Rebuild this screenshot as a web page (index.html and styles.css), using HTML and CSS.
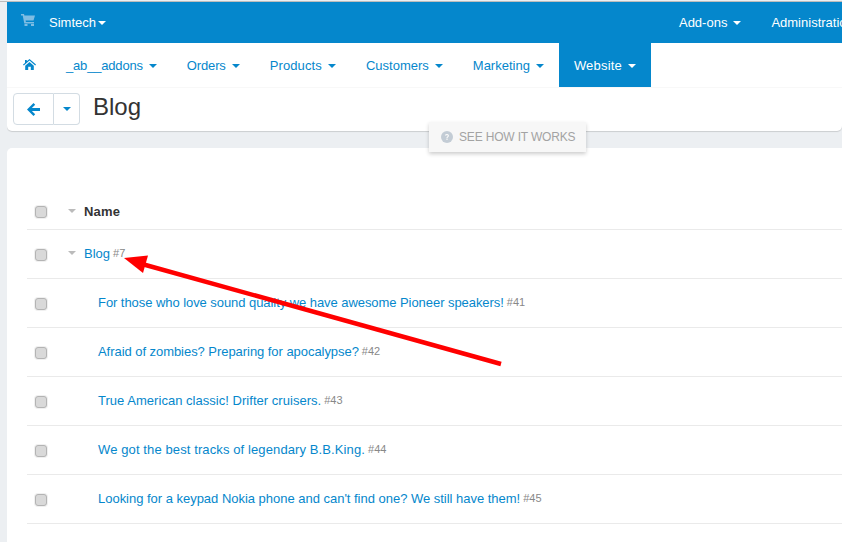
FILE: index.html
```html
<!DOCTYPE html>
<html lang="en">
<head>
<meta charset="utf-8">
<title>Blog</title>
<link rel="stylesheet" href="styles.css">
</head>
<body>
<div class="rule"></div>
<div class="page">
  <header class="topbar">
    <svg class="cart" viewBox="0 0 14 12" width="14" height="12"><path d="M0 0h3l.4 1.500H14l-1.500 5H4.600l.3 1.500H13v1.500H3.300L1.700 1.500H0z"/><rect x="3.500" y="10" width="3" height="2"/><rect x="10" y="10" width="3" height="2"/></svg>
    <a class="brand">Simtech<span class="caret"></span></a>
    <nav class="topright">
      <a class="addons">Add-ons<span class="caret"></span></a>
      <a class="admin">Administration</a>
    </nav>
  </header>
  <nav class="menu">
    <a class="item home"><svg viewBox="0 0 13 11" width="13" height="11"><path d="M6.500 0 13 5.600l-.8.9-5.700-5-5.700 5-.8-.9 2-1.700V1h1.800v1.300zM2.200 6.700 6.500 3l4.300 3.700V11H7.800V7.800H5.200V11H2.200z"/></svg></a>
    <a class="item tight">_ab__addons<span class="caret"></span></a>
    <a class="item orders">Orders<span class="caret"></span></a>
    <a class="item products">Products<span class="caret"></span></a>
    <a class="item">Customers<span class="caret"></span></a>
    <a class="item">Marketing<span class="caret"></span></a>
    <a class="item active">Website<span class="caret"></span></a>
  </nav>
  <section class="toolbar">
    <div class="btngroup">
      <button class="btn back"><svg viewBox="0 0 13 13" width="13" height="13"><path d="M6.500 0l1.700 1.700-3.300 3.300H13v3H4.900l3.300 3.300L6.500 13 0 6.500z"/></svg></button>
      <button class="btn more"><span class="caret"></span></button>
    </div>
    <h1>Blog</h1>
  </section>
  <div class="gap"></div>
  <main class="content">
    <div class="row head">
      <span class="check"></span>
      <span class="tri"></span>
      <strong>Name</strong>
    </div>
    <div class="row">
      <span class="check"></span>
      <span class="tri"></span>
      <a>Blog</a><small>#7</small>
    </div>
    <div class="row child">
      <span class="check"></span>
      <a class="ls-a">For those who love sound quality we have awesome Pioneer speakers!</a><small>#41</small>
    </div>
    <div class="row child">
      <span class="check"></span>
      <a class="ls-b">Afraid of zombies? Preparing for apocalypse?</a><small>#42</small>
    </div>
    <div class="row child">
      <span class="check"></span>
      <a class="ls-c">True American classic! Drifter cruisers.</a><small>#43</small>
    </div>
    <div class="row child">
      <span class="check"></span>
      <a class="ls-d">We got the best tracks of legendary B.B.King.</a><small>#44</small>
    </div>
    <div class="row child">
      <span class="check"></span>
      <a class="ls-e">Looking for a keypad Nokia phone and can't find one? We still have them!</a><small>#45</small>
    </div>
  </main>
</div>
<div class="tip"><svg viewBox="0 0 12 12" width="12" height="12"><circle cx="6" cy="6" r="6" fill="#c3ccd5"/><path d="M4 4.600C4 3.400 5 3 6 3s2 .6 2 1.700C8 6 6.600 6 6.600 7.200H5.400C5.400 5.600 6.700 5.500 6.700 4.700 6.700 4.300 6.400 4.100 6 4.100S5.200 4.300 5.200 4.800zM5.400 7.800h1.200V9H5.400z" fill="#f7f7f7"/></svg><span>SEE HOW IT WORKS</span></div>
<svg class="arrow" viewBox="0 0 842 542" width="842" height="542"><path d="M501 364 142 264" stroke="#f00" stroke-width="4.500" fill="none"/><path d="M124 258 148 255.500 143 273z" fill="#f00"/></svg>
</body>
</html>
```
FILE: styles.css
```css
* { box-sizing: border-box; }
html, body { margin: 0; height: 100%; overflow: hidden; }
body {
  background: #eceff2;
  font-family: "Liberation Sans", Arial, sans-serif;
  font-size: 13px;
  color: #333;
  position: relative;
  padding-top: 1px;
}
.rule { height: 1px; background: #bdbdbd; }
.page { margin-left: 7px; width: 835px; height: 540px; overflow: hidden; }
.caret {
  display: inline-block;
  flex: none;
  width: 0;
  height: 0;
  border-left: 4px solid transparent;
  border-right: 4px solid transparent;
  border-top: 4px solid currentColor;
}
.topbar {
  height: 41px;
  background: #0587cc;
  color: #fff;
  display: flex;
  align-items: center;
  padding-left: 14px;
  white-space: nowrap;
}
.cart { fill: #7fbde3; margin-right: 14px; margin-top: -6px; flex: none; }
.brand { display: flex; align-items: center; gap: 2px; flex: none; }
.topright { margin-left: 573px; display: flex; gap: 30px; flex: none; }
.addons { display: flex; align-items: center; gap: 6px; }
.menu {
  height: 44px;
  background: #fff;
  display: flex;
  color: #0587cc;
}
.item { padding: 0 15px; display: flex; align-items: center; gap: 6px; height: 44px; }
.item .caret { margin-top: 1px; }
.tight { letter-spacing: -.18px; }
.orders { letter-spacing: -.15px; }
.products { letter-spacing: .12px; }
.home { padding: 0 16px 0 16px; width: 44px; }
.home svg { fill: #0587cc; margin-top: -2px; flex: none; }
.active { background: #0587cc; color: #fff; letter-spacing: .2px; }
.toolbar {
  height: 44px;
  background: #fff;
  border-top: 1px solid #f8f8f8;
  border-radius: 0 0 5px 5px;
  box-shadow: 0 1px 1px rgba(0, 0, 0, .14);
  display: flex;
  align-items: center;
  padding-left: 6px;
}
.btngroup { display: flex; height: 32px; margin-top: -1px; }
.btn {
  background: #fff;
  border: 1px solid #d3dce3;
  color: #0587cc;
  padding: 0;
  height: 32px;
  display: flex;
  align-items: center;
  justify-content: center;
}
.back { width: 41px; border-radius: 4px 0 0 4px; }
.back svg { fill: #0587cc; margin-right: 1px; }
.more { width: 26px; border-left: 0; border-radius: 0 4px 4px 0; }
h1 { margin: -5px 0 0 13px; font-size: 24px; font-weight: 400; line-height: 32px; color: #333; }
.gap { height: 17px; }
.content { background: #fff; height: 400px; padding: 43px 0 0 20px; border-radius: 5px 0 0 0; }
.row {
  height: 49px;
  display: flex;
  align-items: center;
  border-bottom: 1px solid #eaeaea;
  color: #0587cc;
}
.row a, .row small { margin-bottom: 2px; }
.row.head { height: 39px; color: #333; padding-top: 2px; }
.head strong { letter-spacing: .15px; }
.head .tri { margin-bottom: 1px; }
.check {
  width: 12px;
  height: 12px;
  background: #d9d9d9;
  border: 1px solid #b4b4b4;
  border-radius: 3px;
  margin: 2px 0 0 8px;
  box-shadow: 0 0 0 1px #f0f0f0;
}
.tri {
  width: 0;
  height: 0;
  border-left: 4px solid transparent;
  border-right: 4px solid transparent;
  border-top: 4px solid #bbb;
  margin: 0 8px 3px 21px;
}
.child a { margin-left: 51px; }
.ls-a { letter-spacing: -.06px; }
.ls-b { letter-spacing: -.05px; }
.ls-c { letter-spacing: .03px; }
.ls-d { letter-spacing: .11px; }
.ls-e { letter-spacing: -.02px; }
small { font-size: 11px; color: #888; margin-left: 3px; }
.tip {
  position: absolute;
  left: 429px;
  top: 122px;
  width: 157px;
  height: 30px;
  background: #f7f7f7;
  color: #a3a3a3;
  font-size: 12px;
  display: flex;
  align-items: center;
  gap: 6px;
  padding-left: 12px;
  letter-spacing: -.17px;
  box-shadow: 0 2px 4px rgba(0, 0, 0, .2);
}
.arrow { position: absolute; left: 0; top: 0; pointer-events: none; }
```
